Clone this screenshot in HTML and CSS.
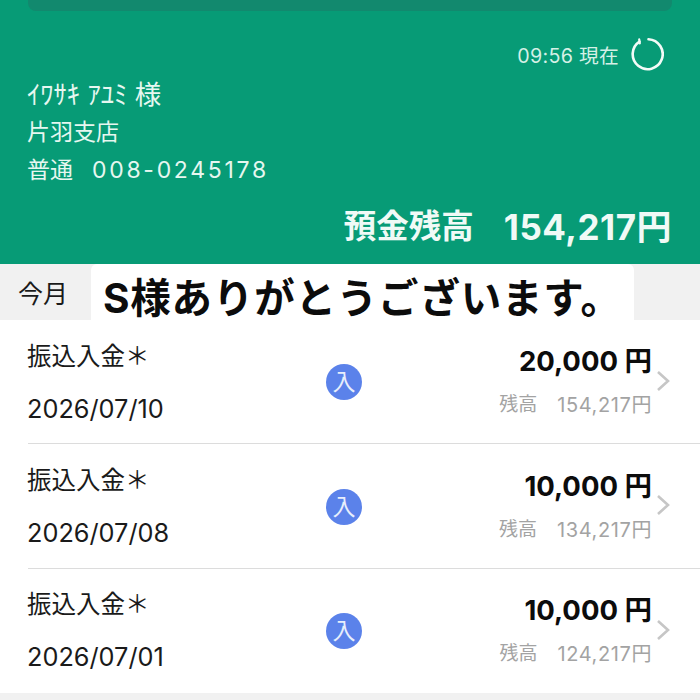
FILE: index.html
```html
<!DOCTYPE html>
<html lang="ja">
<head>
    <meta charset="UTF-8">
    <title>口座詳細</title>
    <link rel="stylesheet" href="styles.css">
</head>
<body>
    <div class="account">
        <div class="top-bar"></div>
        <div class="updated">
            <span>09:56 現在</span>
            <svg class="reload" viewBox="0 0 36 36" width="36" height="36">
                <path d="M11.5 5.6 A15 15 0 1 0 20.5 3.2" fill="none" stroke="#f2fbf7" stroke-width="2.6" stroke-linecap="round"/>
                <path d="M11.2 3.4 L11.8 7.4" fill="none" stroke="#f2fbf7" stroke-width="2.2" stroke-linecap="round"/>
            </svg>
        </div>
        <div class="owner">ｲﾜｻｷ ｱﾕﾐ 様</div>
        <div class="branch">片羽支店</div>
        <div class="number"><span>普通</span><span class="digits">008-0245178</span></div>
        <div class="balance"><span class="balance-label">預金残高</span><span class="balance-value">154,217円</span></div>
    </div>

    <div class="month">
        <span>今月</span>
        <div class="note">S様ありがとうございます。</div>
    </div>

    <div class="list">
        <div class="row">
            <div class="row-left">
                <div>振込入金＊</div>
                <div class="date">2026/07/10</div>
            </div>
            <div class="badge">入</div>
            <div class="row-right">
                <div class="amount">20,000 円</div>
                <div class="rest"><span>残高</span><span class="rest-value">154,217円</span></div>
            </div>
            <svg class="chevron" viewBox="0 0 14 22" width="14" height="22"><path d="M2 2 L12 11 L2 20" fill="none" stroke="#c6c6c6" stroke-width="2.6"/></svg>
        </div>
        <div class="row">
            <div class="row-left">
                <div>振込入金＊</div>
                <div class="date">2026/07/08</div>
            </div>
            <div class="badge">入</div>
            <div class="row-right">
                <div class="amount">10,000 円</div>
                <div class="rest"><span>残高</span><span class="rest-value">134,217円</span></div>
            </div>
            <svg class="chevron" viewBox="0 0 14 22" width="14" height="22"><path d="M2 2 L12 11 L2 20" fill="none" stroke="#c6c6c6" stroke-width="2.6"/></svg>
        </div>
        <div class="row">
            <div class="row-left">
                <div>振込入金＊</div>
                <div class="date">2026/07/01</div>
            </div>
            <div class="badge">入</div>
            <div class="row-right">
                <div class="amount">10,000 円</div>
                <div class="rest"><span>残高</span><span class="rest-value">124,217円</span></div>
            </div>
            <svg class="chevron" viewBox="0 0 14 22" width="14" height="22"><path d="M2 2 L12 11 L2 20" fill="none" stroke="#c6c6c6" stroke-width="2.6"/></svg>
        </div>
    </div>
</body>
</html>
```

FILE: styles.css
```css
html, body {
    height: 100%;
}

body {
    margin: 0;
    overflow: hidden;
    background-color: #f1f1f1;
    color: #1a1a1a;
    font-family: Inter, "Liberation Sans", "Noto Sans CJK JP", sans-serif;
}

.account {
    height: 264px;
    box-sizing: border-box;
    padding: 0 28px 0 27px;
    background-color: #079b76;
    color: #e6f7f0;
    display: flex;
    flex-direction: column;
}

.top-bar {
    height: 11px;
    margin-left: 1px;
    background-color: #12896e;
    border-radius: 0 0 8px 8px;
}

.updated {
    margin-top: 25px;
    height: 36px;
    display: flex;
    justify-content: flex-end;
    align-items: center;
    gap: 9px;
    font-size: 19.7px;
    letter-spacing: 0.3px;
    color: #d5f0e6;
}

.reload {
    margin-right: 8px;
}

.owner {
    margin-top: 4px;
    font-size: 26.5px;
    line-height: 36px;
}

.branch {
    margin-top: 2px;
    font-size: 23px;
    line-height: 36px;
}

.number {
    margin-top: 2px;
    font-size: 23px;
    line-height: 36px;
    display: flex;
    gap: 19px;
}

.digits {
    letter-spacing: 2.7px;
}

.balance {
    margin-top: 17px;
    display: flex;
    justify-content: flex-end;
    align-items: center;
    gap: 30px;
    line-height: 44px;
    font-weight: 700;
    color: #f0faf6;
}

.balance-label {
    font-size: 32.5px;
}

.balance-value {
    font-size: 35px;
    letter-spacing: 0.5px;
}

.month {
    position: relative;
    height: 56px;
    box-sizing: border-box;
    padding: 0 0 0 18px;
    display: flex;
    align-items: center;
    font-size: 25px;
    background-color: #f1f1f1;
}

.note {
    position: absolute;
    left: 91px;
    top: 0;
    width: 543px;
    height: 58px;
    box-sizing: border-box;
    padding: 6px 0 0 12px;
    background-color: #fff;
    border-radius: 6px 6px 0 0;
    color: #0c0c0c;
    font-size: 40.5px;
    font-weight: 700;
    letter-spacing: 0.8px;
    line-height: 58px;
    white-space: nowrap;
    overflow: hidden;
}

.list {
    background-color: #fff;
}

.row {
    position: relative;
    height: 124.4px;
    box-sizing: border-box;
    display: flex;
    align-items: center;
    padding: 0 48px 0 27px;
}

.row::after {
    content: "";
    position: absolute;
    left: 28px;
    right: 0;
    bottom: 0;
    height: 1px;
    background-color: #dcdcdc;
}

.row:last-child::after {
    display: none;
}

.row-left {
    width: 299px;
    font-size: 24.5px;
    line-height: 36px;
    display: flex;
    flex-direction: column;
    gap: 17px;
}

.date {
    font-size: 25.3px;
}

.badge {
    width: 36px;
    height: 36px;
    border-radius: 50%;
    background-color: #5b82ea;
    color: #e8effc;
    font-size: 23px;
    line-height: 36px;
    text-align: center;
}

.row-right {
    margin-left: auto;
    padding-bottom: 3px;
    text-align: right;
}

.amount {
    font-size: 27.5px;
    line-height: 36px;
    font-weight: 700;
    color: #0c0c0c;
}

.rest {
    margin-top: 13px;
    display: flex;
    justify-content: flex-end;
    gap: 20px;
    font-size: 19px;
    line-height: 26px;
    color: #a3a3a3;
}

.rest-value {
    font-size: 20px;
    letter-spacing: 0.6px;
}

.chevron {
    position: absolute;
    right: 30px;
    top: 50px;
}
```
